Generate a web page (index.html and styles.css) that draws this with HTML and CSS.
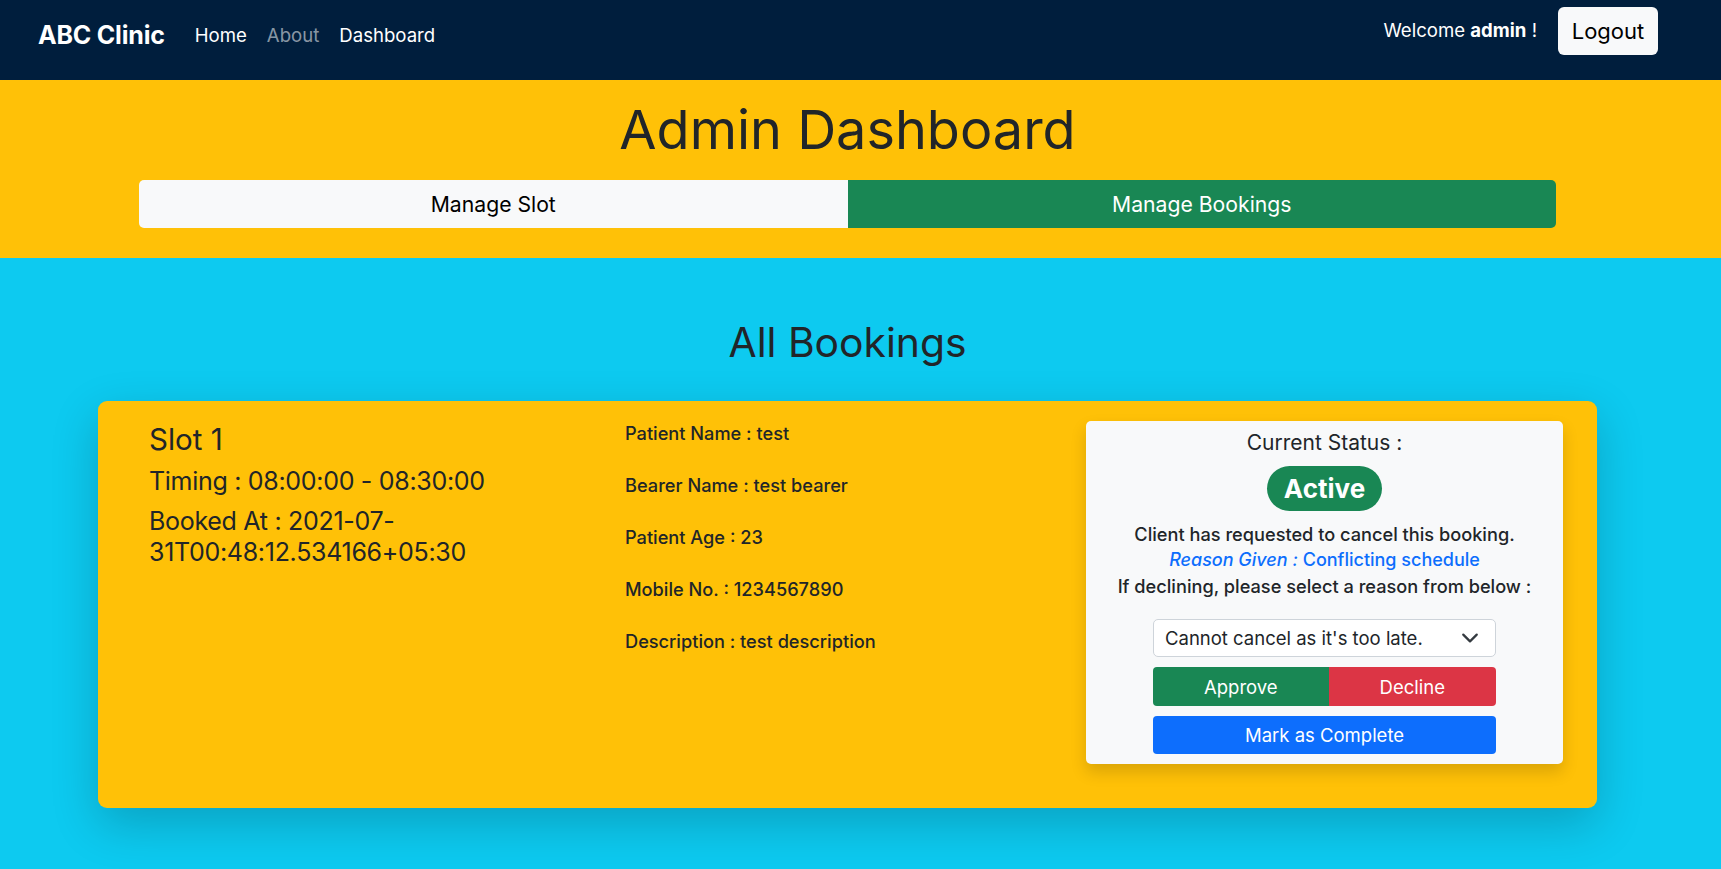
FILE: index.html
```html
<!DOCTYPE html>
<html lang="en">
<head>
<meta charset="utf-8">
<title>ABC Clinic - Admin Dashboard</title>
<link rel="stylesheet" href="styles.css">
</head>
<body>
<nav class="topbar">
  <div class="nav-left">
    <a class="brand" href="#">ABC Clinic</a>
    <ul class="nav-links">
      <li><a class="nav-link" href="#">Home</a></li>
      <li><a class="nav-link muted" href="#">About</a></li>
      <li><a class="nav-link" href="#">Dashboard</a></li>
    </ul>
  </div>
  <div class="nav-right">
    <span class="welcome">Welcome <b>admin</b> !</span>
    <button class="btn-logout" type="button">Logout</button>
  </div>
</nav>

<header class="hero">
  <h1 class="hero-title">Admin Dashboard</h1>
  <div class="tab-group">
    <button class="tab tab-light" type="button">Manage Slot</button>
    <button class="tab tab-green" type="button">Manage Bookings</button>
  </div>
</header>

<main class="bookings">
  <h2 class="section-title">All Bookings</h2>
  <article class="booking-card">
    <div class="col-slot">
      <h3 class="slot-name">Slot 1</h3>
      <h4 class="slot-line">Timing : 08:00:00 - 08:30:00</h4>
      <h4 class="slot-line">Booked At : 2021-07-<wbr>31T00:48:12.534166+05:30</h4>
    </div>
    <div class="col-details">
      <h6 class="detail">Patient Name : test</h6>
      <h6 class="detail">Bearer Name : test bearer</h6>
      <h6 class="detail">Patient Age : 23</h6>
      <h6 class="detail">Mobile No. : 1234567890</h6>
      <h6 class="detail">Description : test description</h6>
    </div>
    <div class="status-panel">
      <p class="status-label">Current Status :</p>
      <span class="badge-active">Active</span>
      <p class="panel-text">Client has requested to cancel this booking.</p>
      <p class="panel-text reason"><em>Reason Given :</em> Conflicting schedule</p>
      <p class="panel-text">If declining, please select a reason from below :</p>
      <div class="select-box">
        <span>Cannot cancel as it's too late.</span>
        <svg class="chevron" viewBox="0 0 16 16" width="18" height="18" aria-hidden="true"><path d="M2 5l6 6 6-6" fill="none" stroke="#343a40" stroke-width="2" stroke-linecap="round" stroke-linejoin="round"/></svg>
      </div>
      <div class="action-group">
        <button class="act act-approve" type="button">Approve</button>
        <button class="act act-decline" type="button">Decline</button>
      </div>
      <button class="act-complete" type="button">Mark as Complete</button>
    </div>
  </article>
</main>
</body>
</html>
```

FILE: styles.css
```css
* { box-sizing: border-box; }

html, body {
  margin: 0;
  padding: 0;
}

body {
  font-family: Inter, "Open Sans", "Liberation Sans", sans-serif;
  color: #212529;
  background: #0dcaf0;
  min-height: 869px;
}

button {
  font-family: inherit;
  border: none;
  cursor: pointer;
}

/* ---------- top navbar ---------- */
.topbar {
  display: flex;
  justify-content: space-between;
  align-items: flex-start;
  height: 80px;
  padding: 0 63px 0 38px;
  background: #001e3d;
}

.nav-left {
  display: flex;
  align-items: center;
  height: 70px;
}

.brand {
  color: #fff;
  text-decoration: none;
  font-weight: 700;
  font-size: 25px;
  letter-spacing: -0.2px;
  margin-right: 30px;
}

.nav-links {
  display: flex;
  gap: 20px;
  list-style: none;
  margin: 0;
  padding: 0;
}

.nav-link {
  color: #fff;
  text-decoration: none;
  font-size: 18.6px;
}

.nav-link.muted {
  color: rgba(255, 255, 255, 0.55);
}

.nav-right {
  display: flex;
  align-items: center;
  gap: 21px;
  height: 48px;
  margin-top: 7px;
}

.welcome {
  color: #fff;
  font-size: 18.6px;
  margin-top: -2px;
}

.welcome b { font-weight: 700; }

.btn-logout {
  width: 100px;
  height: 48px;
  background: #f8f9fa;
  color: #000;
  font-size: 22px;
  border-radius: 6px;
}

/* ---------- yellow hero ---------- */
.hero {
  background: #ffc107;
  padding: 20px 165px 30px 139px;
}

.hero-title {
  margin: 0 0 20px;
  text-align: center;
  font-weight: 400;
  font-size: 54px;
  line-height: 60px;
  color: #212529;
}

.tab-group {
  display: flex;
  height: 48px;
}

.tab {
  flex: 1 1 0;
  font-size: 21.2px;
}

.tab-light {
  background: #f8f9fa;
  color: #000;
  border-radius: 5px 0 0 5px;
}

.tab-green {
  background: #198754;
  color: #fff;
  border-radius: 0 5px 5px 0;
}

/* ---------- bookings ---------- */
.bookings {
  padding: 60px 124px 61px 98px;
}

.section-title {
  margin: 0 0 35px;
  text-align: center;
  font-weight: 400;
  font-size: 40.8px;
  line-height: 48px;
  color: #212529;
}

.booking-card {
  display: grid;
  grid-template-columns: 452px 437px 477px;
  column-gap: 24px;
  align-items: start;
  padding: 20px 34px 44px 51px;
  background: #ffc107;
  border-radius: 9px;
  box-shadow: 0 16px 48px rgba(0, 0, 0, 0.2);
}

.slot-name {
  margin: 0 0 9px;
  font-weight: 400;
  font-size: 29.5px;
  line-height: 36px;
}

.slot-line {
  margin: 0 0 9px;
  font-weight: 400;
  font-size: 25px;
  letter-spacing: -0.3px;
  line-height: 31px;
}

.col-details {
  display: flex;
  flex-direction: column;
  gap: 31px;
  padding-top: 2px;
}

.detail {
  margin: 0;
  font-size: 18.2px;
  line-height: 21px;
  font-weight: 500;
}

/* ---------- status panel ---------- */
.status-panel {
  display: flex;
  flex-direction: column;
  align-items: center;
  padding: 9px 0 10px;
  background: #f8f9fa;
  border-radius: 5px;
  box-shadow: 0 8px 16px rgba(0, 0, 0, 0.15);
  text-align: center;
}

.status-label {
  margin: 0;
  font-size: 21px;
  line-height: 26px;
}

.badge-active {
  margin: 10px 0;
  height: 45px;
  line-height: 45px;
  padding: 0 17px;
  border-radius: 23px;
  background: #198754;
  color: #fff;
  font-weight: 700;
  font-size: 26px;
}

.panel-text {
  margin: 0;
  font-size: 18.2px;
  line-height: 26px;
  font-weight: 500;
}

.reason {
  color: #0d6efd;
  font-size: 18px;
}

.reason em {
  font-style: italic;
}

.select-box {
  display: flex;
  align-items: center;
  justify-content: space-between;
  width: 343px;
  height: 38px;
  margin-top: 20px;
  padding: 0 16px 0 11px;
  background: #fff;
  border: 1px solid #ced4da;
  border-radius: 5px;
  font-size: 18.5px;
  text-align: left;
}

.chevron {
  flex: none;
}

.action-group {
  display: flex;
  width: 343px;
  height: 39px;
  margin-top: 10px;
}

.act {
  flex: 1 1 auto;
  color: #fff;
  font-size: 18.5px;
}

.act-approve {
  background: #198754;
  border-radius: 4px 0 0 4px;
}

.act-decline {
  background: #dc3545;
  border-radius: 0 4px 4px 0;
}

.act-complete {
  width: 343px;
  height: 38px;
  margin-top: 10px;
  background: #0d6efd;
  color: #fff;
  font-size: 18.5px;
  border-radius: 4px;
}
```
